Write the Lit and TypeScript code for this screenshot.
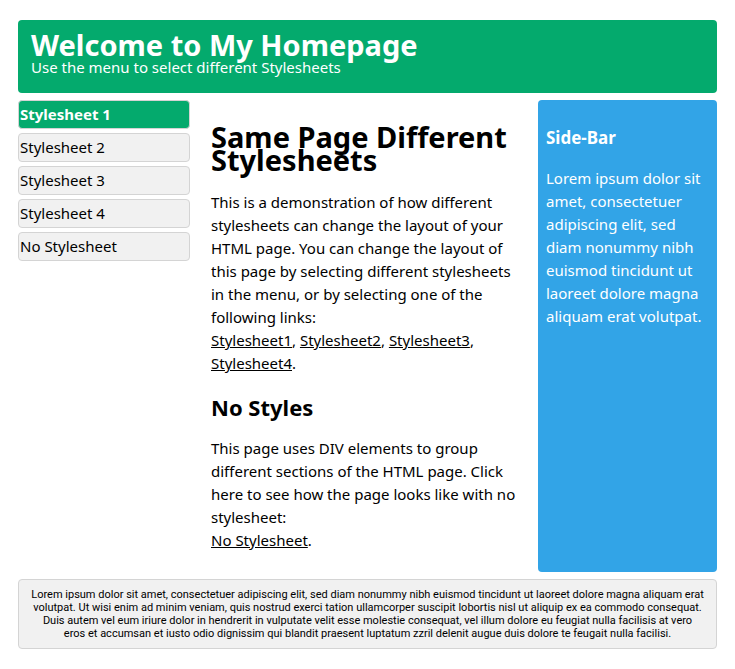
import { LitElement, html, css } from "lit";
import { customElement, state } from "lit/decorators.js";

const SHEETS = ["Stylesheet 1", "Stylesheet 2", "Stylesheet 3", "Stylesheet 4", "No Stylesheet"];

@customElement("app-root")
export class AppRoot extends LitElement {
  @state() private active = 0;

  static styles = css`
    :host {
      display: block;
      padding: 20px 18px;
      background: #fff;
      color: #000;
      font-family: "Noto Sans", "Open Sans", sans-serif;
      font-size: 15px;
      line-height: 23px;
    }
    h1, h2, h3, p, ul { margin: 0; padding: 0; }
    h1 { font-size: 29px; line-height: 23px; }
    h2 { font-size: 22px; line-height: 23px; }
    h3 { font-size: 17px; line-height: 23px; }
    .header {
      background: #04aa6d;
      color: #fff;
      border-radius: 4px;
      padding: 13px 13px 14px;
    }
    .columns {
      display: grid;
      grid-template-columns: 172fr 348fr 179fr;
      margin: 7px 0;
    }
    .menu {
      list-style: none;
      display: flex;
      flex-direction: column;
      gap: 4px;
    }
    .item {
      display: block;
      width: 100%;
      box-sizing: border-box;
      padding: 2px 1px;
      border: 1px solid #d4d4d4;
      border-radius: 4px;
      background: #f1f1f1;
      color: #000;
      font: inherit;
      text-align: left;
      cursor: pointer;
    }
    .item.active {
      background: #04aa6d;
      color: #fff;
      font-weight: bold;
    }
    .main {
      padding: 25px 21px 20px;
    }
    .main h1 { margin-bottom: 20px; }
    .main h2 { margin: 21px 0 18px; }
    .main a { color: inherit; }
    .side {
      padding: 26px 8px;
      background: #32a4e7;
      color: #fff;
      border-radius: 4px;
    }
    .side h3 { margin-bottom: 18px; }
    .footer {
      padding: 8px;
      border: 1px solid #d4d4d4;
      border-radius: 4px;
      background: #f1f1f1;
      font-family: Roboto, "Noto Sans", sans-serif;
      font-size: 11px;
      line-height: 13px;
      text-align: center;
    }
  `;

  private pick(e: Event, i: number) {
    e.preventDefault();
    this.active = i;
  }

  private link(label: string, i: number) {
    return html`<a href="#" @click=${(e: Event) => this.pick(e, i)}>${label}</a>`;
  }

  render() {
    return html`
      <header class="header">
        <h1>Welcome to My Homepage</h1>
        <p>Use the menu to select different Stylesheets</p>
      </header>
      <div class="columns">
        <nav>
          <ul class="menu">
            ${SHEETS.map((name, i) => html`<li>
              <button class="item ${i === this.active ? "active" : ""}" @click=${(e: Event) => this.pick(e, i)}>${name}</button>
            </li>`)}
          </ul>
        </nav>
        <main class="main">
          <h1>Same Page Different Stylesheets</h1>
          <p>
            This is a demonstration of how different stylesheets can change the layout of your HTML page.
            You can change the layout of this page by selecting different stylesheets in the menu, or by
            selecting one of the following links:<br />
            ${this.link("Stylesheet1", 0)}, ${this.link("Stylesheet2", 1)}, ${this.link("Stylesheet3", 2)},
            ${this.link("Stylesheet4", 3)}.
          </p>
          <h2>No Styles</h2>
          <p>
            This page uses DIV elements to group different sections of the HTML page. Click here to see how
            the page looks like with no stylesheet:<br />
            ${this.link("No Stylesheet", 4)}.
          </p>
        </main>
        <aside class="side">
          <h3>Side-Bar</h3>
          <p>
            Lorem ipsum dolor sit amet, consectetuer adipiscing elit, sed diam nonummy nibh euismod
            tincidunt ut laoreet dolore magna aliquam erat volutpat.
          </p>
        </aside>
      </div>
      <footer class="footer">
        Lorem ipsum dolor sit amet, consectetuer adipiscing elit, sed diam nonummy nibh euismod tincidunt ut
        laoreet dolore magna aliquam erat<br />
        volutpat. Ut wisi enim ad minim veniam, quis nostrud exerci tation
        ullamcorper suscipit lobortis nisl ut aliquip ex ea commodo consequat.<br />
        Duis autem vel eum iriure dolor
        in hendrerit in vulputate velit esse molestie consequat, vel illum dolore eu feugiat nulla facilisis at
        vero<br />
        eros et accumsan et iusto odio dignissim qui blandit praesent luptatum zzril delenit augue duis
        dolore te feugait nulla facilisi.
      </footer>
    `;
  }
}
